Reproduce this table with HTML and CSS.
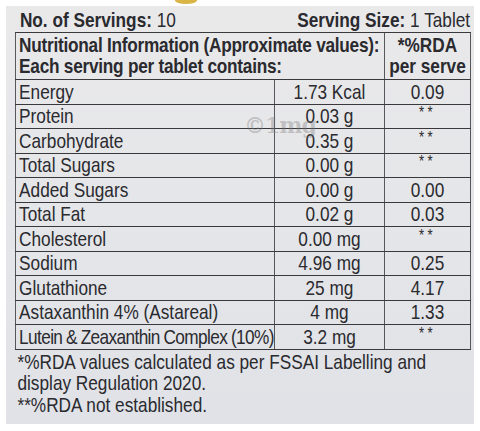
FILE: index.html
```html
<!DOCTYPE html>
<html>
	<head>
		<meta charset="utf-8">
		<title>Nutritional Information</title>
		<link rel="stylesheet" href="styles.css">
	</head>
	<body>
		<div class="label">
			<div class="inner">
				<div class="top">
					<div><b>No. of Servings:</b> 10</div>
					<div><b>Serving Size:</b> 1 Tablet</div>
				</div>
				<table class="facts">
					<colgroup>
						<col class="c-name">
						<col class="c-amount">
						<col class="c-rda">
					</colgroup>
					<tr class="head">
						<th colspan="2" class="left">Nutritional Information (Approximate values):<br>Each serving per tablet contains:</th>
						<th>*%RDA<br>per serve</th>
					</tr>
					<tr><td>Energy</td><td class="val">1.73 Kcal</td><td class="val">0.09</td></tr>
					<tr><td>Protein</td><td class="val">0.03 g</td><td class="val"><span class="na">**</span></td></tr>
					<tr><td>Carbohydrate</td><td class="val">0.35 g</td><td class="val"><span class="na">**</span></td></tr>
					<tr><td>Total Sugars</td><td class="val">0.00 g</td><td class="val"><span class="na">**</span></td></tr>
					<tr><td>Added Sugars</td><td class="val">0.00 g</td><td class="val">0.00</td></tr>
					<tr><td>Total Fat</td><td class="val">0.02 g</td><td class="val">0.03</td></tr>
					<tr><td>Cholesterol</td><td class="val">0.00 mg</td><td class="val"><span class="na">**</span></td></tr>
					<tr><td>Sodium</td><td class="val">4.96 mg</td><td class="val">0.25</td></tr>
					<tr><td>Glutathione</td><td class="val">25 mg</td><td class="val">4.17</td></tr>
					<tr><td>Astaxanthin 4% (Astareal)</td><td class="val">4 mg</td><td class="val">1.33</td></tr>
					<tr><td class="tight">Lutein &amp; Zeaxanthin Complex (10%)</td><td class="val">3.2 mg</td><td class="val"><span class="na">**</span></td></tr>
				</table>
				<div class="notes">
					*%RDA values calculated as per FSSAI Labelling and<br>
					display Regulation 2020.<br>
					**%RDA not established.
				</div>
			</div>
			<div class="mark">©1mg</div>
		</div>
		<div class="blob"></div>
	</body>
</html>
```
FILE: styles.css
```css
*{
	margin: 0;
	padding: 0;
	box-sizing: border-box;
}
body{
	background: #ffffff;
	font-family: "Liberation Sans", Arial, sans-serif;
	color: #2a2a2f;
	position: relative;
	overflow: hidden;
}
.label{
	margin: 6px 6px 0 6px;
	width: 468px;
	height: 418px;
	background: linear-gradient(180deg, #e9e9ea 0%, #e4e5e8 60%, #e0e2e7 100%);
	padding: 0 0 0 9px;
	position: relative;
}
/* label type is condensed: lay out wide, then squeeze */
.inner{
	width: 555px;
	transform: scaleX(0.82);
	transform-origin: 0 0;
}
.top{
	display: flex;
	justify-content: space-between;
	height: 26px;
	font-size: 21px;
	line-height: 28px;
	padding: 0 0 0 6px;
}
.facts{
	border-collapse: collapse;
	width: 555px;
	font-size: 21px;
	table-layout: fixed;
}
.facts .c-name{
	width: 316px;
}
.facts .c-amount{
	width: 134px;
}
.facts .c-rda{
	width: 105px;
}
.facts td, .facts th{
	border: 1.6px solid #38383d;
	height: 24.5px;
	line-height: 22px;
	padding: 0 0 0 4px;
	white-space: nowrap;
	overflow: hidden;
}
.facts td.tight{
	letter-spacing: -0.75px;
	word-spacing: -0.5px;
}
.facts .head th{
	height: 47px;
	line-height: 21px;
	text-align: center;
	padding: 0 0 2px 0;
}
.facts .head th.left{
	text-align: left;
	padding-left: 4px;
	letter-spacing: -0.3px;
}
.facts td.val{
	text-align: center;
	padding: 0;
}
.na{
	font-size: 16px;
	letter-spacing: 4px;
	vertical-align: 5px;
	line-height: 10px;
}
.notes{
	font-size: 21px;
	line-height: 21.5px;
	padding: 1px 0 0 3px;
}
.mark{
	position: absolute;
	left: 238px;
	top: 106px;
	font-family: "DejaVu Serif", serif;
	font-weight: bold;
	font-size: 22px;
	color: rgba(120, 120, 125, 0.35);
	letter-spacing: -1px;
}
.blob{
	position: absolute;
	left: 175px;
	top: -3px;
	width: 22px;
	height: 7px;
	border-radius: 50%;
	background: #d8b544;
}
```
